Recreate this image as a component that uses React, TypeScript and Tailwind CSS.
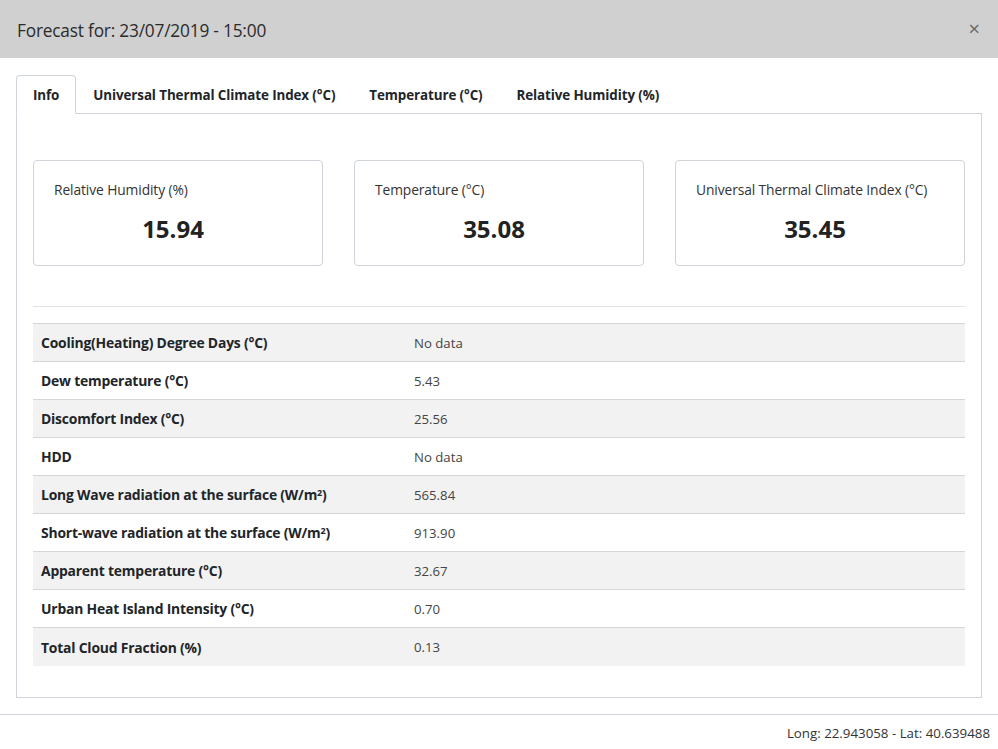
import React from "react";

const rows: [React.ReactNode, string][] = [
  ["Cooling(Heating) Degree Days (°C)", "No data"],
  ["Dew temperature (°C)", "5.43"],
  ["Discomfort Index (°C)", "25.56"],
  ["HDD", "No data"],
  [<>Long Wave radiation at the surface (W/m<sup className="text-[9px]">2</sup>)</>, "565.84"],
  [<>Short-wave radiation at the surface (W/m<sup className="text-[9px]">2</sup>)</>, "913.90"],
  ["Apparent temperature (°C)", "32.67"],
  ["Urban Heat Island Intensity (°C)", "0.70"],
  ["Total Cloud Fraction (%)", "0.13"],
];

const cards = [
  ["Relative Humidity (%)", "15.94"],
  ["Temperature (°C)", "35.08"],
  ["Universal Thermal Climate Index (°C)", "35.45"],
];

const tabs = ["Info", "Universal Thermal Climate Index (°C)", "Temperature (°C)", "Relative Humidity (%)"];

export default function App() {
  return (
    <div
      className="w-[998px] h-[749px] overflow-hidden bg-white text-[#212529] flex flex-col"
      style={{ fontFamily: '"Open Sans", "Noto Sans", sans-serif' }}
    >
      <div className="h-[58px] shrink-0 bg-[#d0d0d0] flex items-center justify-between pl-[17px] pr-[18px] pt-[3px]">
        <div className="text-[17.3px] text-[#2b2b2b] tracking-[-0.2px]">Forecast for: 23/07/2019 - 15:00</div>
        <div className="text-[20px] text-[#666] leading-none -mt-[3px]">×</div>
      </div>
      <div className="px-[16px] pt-[17px] pb-[16px] shrink-0">
        <div className="flex h-[39px] border-b border-[#ced4da]">
          {tabs.map((t, i) => (
            <div
              key={t}
              className={
                "px-[16px] pt-[2px] flex items-center text-[13.4px] font-bold tracking-[-0.1px] " +
                (i === 0
                  ? "border border-[#ced4da] border-b-white rounded-t-[4px] -mb-px bg-white"
                  : "border border-transparent")
              }
            >
              {t}
            </div>
          ))}
        </div>
        <div className="h-[584px] border border-t-0 border-[#ced4da] px-[16px] pt-[46px]">
          <div className="grid grid-cols-3 gap-[31px]">
            {cards.map(([l, v]) => (
              <div key={l} className="h-[106px] border border-[#ced4da] rounded-[4px] pt-[19px] pl-[20px] pr-[30px]">
                <div className="text-[13.8px] text-[#333] tracking-[-0.1px] whitespace-nowrap">{l}</div>
                <div className="text-center text-[24px] font-bold mt-[10px] text-[#222]">{v}</div>
              </div>
            ))}
          </div>
          <div className="mt-[40px] border-t border-[#e3e3e3]" />
          <div className="mt-[16px] border-t border-[#d6d6d6]">
            {rows.map(([l, v], i) => (
              <div
                key={i}
                className={
                  "h-[38px] flex items-center border-b border-[#d6d6d6] last:border-b-0 pt-[2px] " +
                  (i % 2 === 0 ? "bg-[#f2f2f2]" : "bg-white")
                }
              >
                <div className="w-[373px] pl-[8px] text-[13.9px] font-bold tracking-[-0.2px]">{l}</div>
                <div className="pl-[8px] text-[13.2px] text-[#444]">{v}</div>
              </div>
            ))}
          </div>
        </div>
      </div>
      <div className="border-t border-[#ced4da] flex justify-end items-center h-[36px] pr-[8px] pt-[3px] text-[13.3px] text-[#333]">
        Long: 22.943058 - Lat: 40.639488
      </div>
    </div>
  );
}
